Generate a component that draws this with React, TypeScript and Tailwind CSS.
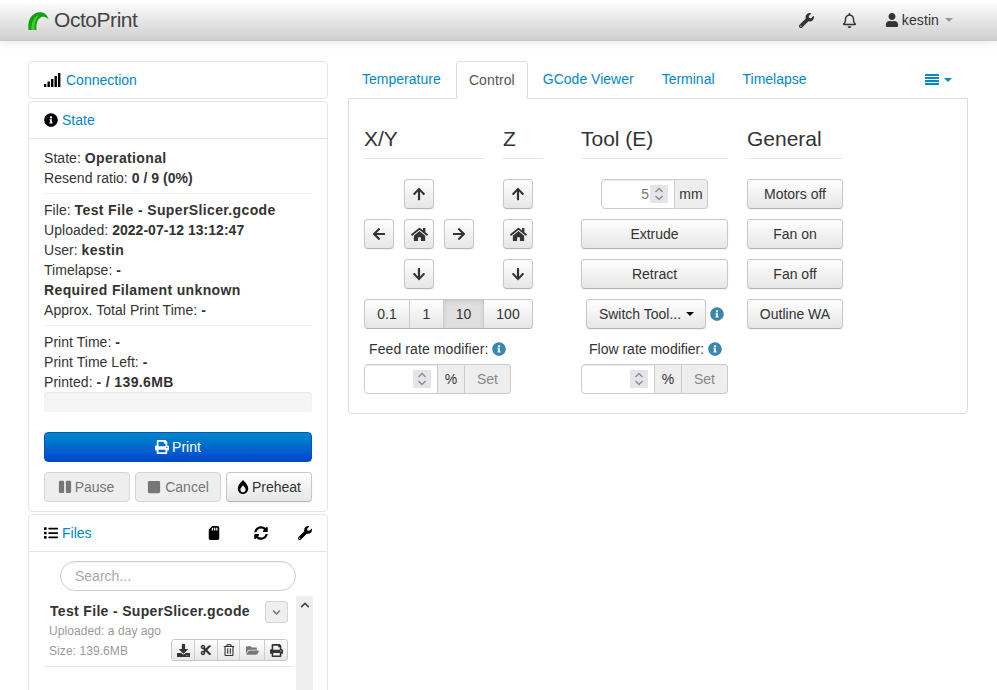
import React from "react";
import {
  FaWrench, FaRegBell, FaUser, FaInfoCircle, FaArrowUp, FaArrowDown, FaArrowLeft, FaArrowRight,
  FaHome, FaPrint, FaPause, FaStop, FaBurn, FaList, FaSdCard, FaSyncAlt, FaDownload, FaCut, FaRegTrashAlt,
  FaFolderOpen, FaChevronUp, FaChevronDown,
} from "react-icons/fa";

const btn =
  "inline-flex items-center justify-center h-[30px] rounded-[4px] border border-[#c8c8c8] border-b-[#b3b3b3] bg-gradient-to-b from-white to-[#e6e6e6] text-[#333] shadow-[0_1px_2px_rgba(0,0,0,0.05)] text-[14px]";
const disabledBtn =
  "inline-flex items-center justify-center h-[30px] rounded-[4px] border border-[#d5d5d5] bg-[#eeeeee] text-[#777] text-[14px]";

function Signal() {
  return (
    <svg width="17" height="14" viewBox="0 0 17 14" className="inline-block mr-[1px]" fill="#000">
      <rect x="0" y="11" width="2.4" height="3" />
      <rect x="3.5" y="8.5" width="2.4" height="5.5" />
      <rect x="7" y="6" width="2.4" height="8" />
      <rect x="10.5" y="3" width="2.4" height="11" />
      <rect x="14" y="0" width="2.4" height="14" />
    </svg>
  );
}

function Logo() {
  return (
    <svg width="21" height="18" viewBox="0 0 21 18" className="block mt-[1px]">
      <path d="M0.5 18 C-1 7 5 0.3 12 0.3 C16.5 0.3 19.5 3 20.5 7.5 C18.5 5 15.5 4.2 13 5.3 C9.5 7 8 11.5 8.5 18 Z" fill="#12a012" />
      <path d="M3.5 18 C3 11 6 4.5 11 3 C7.5 7 6 12 6.5 18 Z" fill="#3fcf2c" />
    </svg>
  );
}

function Caret({ color, className = "" }: { color: string; className?: string }) {
  return (
    <svg width="8" height="4" viewBox="0 0 8 4" className={`shrink-0 ${className}`}>
      <path d="M0 0 H8 L4 4 Z" fill={color} />
    </svg>
  );
}

function Spinner() {
  return (
    <span className="flex flex-col items-center justify-center w-[18px] h-[18px] bg-[#e4e4ea] shrink-0">
      <svg width="10" height="16" viewBox="0 0 10 16" fill="none" stroke="#8a8a8a" strokeWidth="1.3">
        <path d="M1.5 6 L5 2.5 L8.5 6" />
        <path d="M1.5 10 L5 13.5 L8.5 10" />
      </svg>
    </span>
  );
}

function Info() {
  return <FaInfoCircle className="text-[#3a87ad] text-[14px] shrink-0" />;
}

function NumberGroup({ value, unit, set, unitWidth, inputWidth }: { value?: string; unit: string; set?: boolean; unitWidth: string; inputWidth: string }) {
  return (
    <div className="flex h-[30px]">
      <div className={`${inputWidth} flex items-center justify-end gap-[1px] pr-[6px] border border-[#ccc] rounded-l-[4px] bg-white text-[#777] text-[14px] shadow-[inset_0_1px_1px_rgba(0,0,0,0.075)]`}>
        {value && <span>{value}</span>}
        <Spinner />
      </div>
      <div className={`${unitWidth} flex items-center justify-center bg-[#eee] border border-l-0 border-[#ccc] text-[#333] text-[14px] ${set ? "" : "rounded-r-[4px]"}`}>{unit}</div>
      {set && <div className="w-[46px] flex items-center justify-center bg-[#eee] border border-l-0 border-[#ccc] rounded-r-[4px] text-[#888] text-[14px]">Set</div>}
    </div>
  );
}

function SquareBtn({ children }: { children: React.ReactNode }) {
  return <button className={`${btn} w-[30px] text-[14px]`}>{children}</button>;
}

function Head({ title, width }: { title: string; width: string }) {
  return (
    <div className={`${width} h-[40px] border-b border-[#e5e5e5] text-[21px] leading-[40px] text-[#333]`}>{title}</div>
  );
}

function Panel({ children, className = "" }: { children: React.ReactNode; className?: string }) {
  return <section className={`border border-[#e5e5e5] rounded-[4px] ${className}`}>{children}</section>;
}

function PanelHead({ icon, title }: { icon: React.ReactNode; title: string }) {
  return (
    <div className="h-[36px] px-[15px] flex items-center gap-[4px] text-[14px]">
      {icon}
      <a className="text-[#0088cc]">{title}</a>
    </div>
  );
}

function Line({ label, value, numeric }: { label: string; value: string; numeric?: boolean }) {
  return (
    <div className="h-[20px] leading-[20px] tracking-[0.04px]">
      {label}{" "}
      <b className={numeric ? "tracking-[0.03px]" : "tracking-[0.37px]"}>{value}</b>
    </div>
  );
}

export default function App() {
  return (
    <div className="h-[690px] overflow-hidden bg-white text-[#333] text-[14px] leading-[20px] font-['Liberation_Sans',Arial,sans-serif]">
      <header className="h-[41px] flex items-center bg-gradient-to-b from-white to-[#cfcfcf] border-b border-[#c8c8c8] shadow-[0_1px_10px_rgba(0,0,0,0.1)] pl-[28px] pr-[44px]">
        <Logo />
        <span className="ml-[5px] text-[21px] text-[#444] -tracking-[0.45px]">OctoPrint</span>
        <div className="ml-auto flex items-center text-[#333]">
          <FaWrench className="text-[15px]" />
          <FaRegBell className="ml-[28px] text-[15px]" />
          <FaUser className="ml-[28px] text-[14px]" />
          <span className="ml-[3px] tracking-[0.1px]">kestin</span>
          <Caret color="#999" className="ml-[6px]" />
        </div>
      </header>

      <main className="flex pl-[28px] pr-[29px] pt-[20px] gap-[20px]">
        <aside className="w-[300px] shrink-0 flex flex-col gap-[2px]">
          <Panel>
            <PanelHead icon={<Signal />} title="Connection" />
          </Panel>

          <Panel className="h-[411px]">
            <PanelHead icon={<FaInfoCircle className="text-[14px] text-black" />} title="State" />
            <div className="border-t border-[#e5e5e5] px-[15px] pt-[9px]">
              <Line label="State:" value="Operational" />
              <Line label="Resend ratio:" value="0 / 9 (0%)" numeric />
              <div className="h-px bg-[#eee] mt-[5px] mb-[6px]" />
              <Line label="File:" value="Test File - SuperSlicer.gcode" />
              <Line label="Uploaded:" value="2022-07-12 13:12:47" numeric />
              <Line label="User:" value="kestin" />
              <Line label="Timelapse:" value="-" />
              <div className="h-[20px]"><b className="tracking-[0.37px]">Required Filament unknown</b></div>
              <Line label="Approx. Total Print Time:" value="-" />
              <div className="h-px bg-[#eee] mt-[5px] mb-[6px]" />
              <Line label="Print Time:" value="-" />
              <Line label="Print Time Left:" value="-" />
              <Line label="Printed:" value="- / 139.6MB" />
              <div className="h-[20px] rounded-[4px] bg-[#f5f5f5] shadow-[inset_0_1px_2px_rgba(0,0,0,0.06)]" />
              <button className="mt-[20px] w-full h-[30px] rounded-[4px] bg-gradient-to-b from-[#0088cc] to-[#0044cc] text-white flex items-center justify-center gap-[3px] border border-[#0055bb]">
                <FaPrint className="text-[14px]" /> Print
              </button>
              <div className="mt-[10px] flex gap-[5px]">
                <button className={`${disabledBtn} w-[86px] gap-[3px] pr-[2px]`}><FaPause className="text-[14px]" />Pause</button>
                <button className={`${disabledBtn} w-[86px] gap-[4px]`}><FaStop className="text-[14px]" />Cancel</button>
                <button className={`${btn} w-[86px] gap-[2px] pr-[1px]`}><FaBurn className="text-[14px] text-black" />Preheat</button>
              </div>
            </div>
          </Panel>

          <Panel className="h-[200px] overflow-hidden">
            <div className="h-[36px] pl-[15px] pr-[15px] flex items-center text-[14px]">
              <FaList className="text-[14px] text-black" />
              <a className="ml-[4px] text-[#0088cc]">Files</a>
              <FaSdCard className="ml-auto text-[14px] text-black" />
              <FaSyncAlt className="ml-[33px] text-[14px] text-black" />
              <FaWrench className="ml-[30px] text-[14px] text-black" />
            </div>
            <div className="border-t border-[#e5e5e5] flex flex-col">
              <div className="mt-[9px] ml-[31px] w-[236px] h-[30px] rounded-[15px] border border-[#ccc] px-[14px] flex items-center text-[#aaa] shadow-[inset_0_1px_1px_rgba(0,0,0,0.05)]">Search...</div>
              <div className="mt-[5px] flex ml-[15px]">
                <div className="w-[249px]">
                  <div className="h-[71px] border-b border-[#e5e5e5] pl-[5px] pr-[5px] pt-[5px] relative">
                    <div className="ml-[1px] font-bold tracking-[0.33px] leading-[20px]">Test File - SuperSlicer.gcode</div>
                    <div className="text-[12px] text-[#999] leading-[20px] tracking-[0.07px]">Uploaded: a day ago</div>
                    <div className="text-[12px] text-[#999] leading-[20px] tracking-[0.07px]">Size: 139.6MB</div>
                    <button className="absolute right-[5px] top-[5px] w-[23px] h-[22px] rounded-[3px] border border-[#d5d5d5] bg-[#eee] flex items-center justify-center text-[#777]"><FaChevronDown className="text-[9px]" /></button>
                    <div className="absolute right-[5px] top-[43px] flex h-[22px] rounded-[3px] border border-[#c8c8c8] bg-gradient-to-b from-white to-[#e6e6e6] text-[12px] text-[#333]">
                      <span className="w-[23px] flex items-center justify-center border-r border-[#ccc]"><FaDownload className="text-[13px]" /></span>
                      <span className="w-[23px] flex items-center justify-center border-r border-[#ccc]"><FaCut /></span>
                      <span className="w-[22px] flex items-center justify-center border-r border-[#ccc]"><FaRegTrashAlt /></span>
                      <span className="w-[25px] flex items-center justify-center border-r border-[#ccc] text-[#777]"><FaFolderOpen className="text-[13px]" /></span>
                      <span className="w-[22px] flex items-center justify-center"><FaPrint className="text-[13px]" /></span>
                    </div>
                  </div>
                </div>
                <div className="ml-[3px] w-[17px] h-[100px] bg-[#efefef] flex justify-center pt-[3px]"><FaChevronUp className="text-[10px] text-[#444] mt-[1px]" /></div>
              </div>
            </div>
          </Panel>
        </aside>

        <div className="w-[620px] shrink-0">
          <nav className="h-[37px] flex items-start relative pr-[16px]">
            <a className="h-[37px] pl-[14px] pr-[15px] leading-[37px] text-[#0088cc] tracking-[0.02px]">Temperature</a>
            <a className="h-[38px] w-[72px] text-center leading-[37px] text-[#555] bg-white border border-[#ddd] border-b-white rounded-t-[4px] z-10 tracking-[0.1px]">Control</a>
            <a className="h-[37px] px-[15px] leading-[37px] text-[#0088cc]">GCode Viewer</a>
            <a className="h-[37px] pl-[13px] pr-[14px] leading-[37px] text-[#0088cc]">Terminal</a>
            <a className="h-[37px] pl-[14px] pr-[15px] leading-[37px] text-[#0088cc]">Timelapse</a>
            <span className="ml-auto h-[37px] flex items-center gap-[5px]">
              <svg width="14" height="11" viewBox="0 0 14 11" fill="#0088cc" className="-ml-[1px]">
                <rect x="0" y="0" width="14" height="2" />
                <rect x="0" y="3" width="14" height="2" />
                <rect x="0" y="6" width="14" height="2" />
                <rect x="0" y="9" width="14" height="2" />
              </svg>
              <Caret color="#0088cc" />
            </span>
          </nav>
          <div className="h-[316px] border border-[#ddd] rounded-b-[4px] pt-[20px] pl-[15px] flex">
            <div className="w-[217px] shrink-0">
              <div className="flex gap-[19px]">
                <div className="w-[120px]">
                  <Head title="X/Y" width="w-[120px]" />
                  <div className="mt-[20px] grid grid-cols-[30px_30px_30px] gap-x-[10px] gap-y-[10px]">
                    <span />
                    <SquareBtn><FaArrowUp className="text-[14px]" /></SquareBtn>
                    <span />
                    <SquareBtn><FaArrowLeft className="text-[14px]" /></SquareBtn>
                    <SquareBtn><FaHome className="text-[17px]" /></SquareBtn>
                    <SquareBtn><FaArrowRight className="text-[14px]" /></SquareBtn>
                    <span />
                    <SquareBtn><FaArrowDown className="text-[14px]" /></SquareBtn>
                    <span />
                  </div>
                </div>
                <div className="w-[40px]">
                  <Head title="Z" width="w-[40px]" />
                  <div className="mt-[20px] flex flex-col gap-[10px]">
                    <SquareBtn><FaArrowUp className="text-[14px]" /></SquareBtn>
                    <SquareBtn><FaHome className="text-[17px]" /></SquareBtn>
                    <SquareBtn><FaArrowDown className="text-[14px]" /></SquareBtn>
                  </div>
                </div>
              </div>
              <div className="mt-[10px] flex w-[169px] h-[30px] rounded-[4px] border border-[#c8c8c8] border-b-[#b3b3b3] bg-gradient-to-b from-white to-[#e6e6e6] text-[14px] text-[#333]">
                <span className="w-[45px] flex items-center justify-center border-r border-[#ccc]">0.1</span>
                <span className="w-[33px] flex items-center justify-center">1</span>
                <span className="w-[41px] flex items-center justify-center bg-[#e0e0e0] border-x border-[#ccc] shadow-[inset_0_2px_4px_rgba(0,0,0,0.1)]">10</span>
                <span className="flex-1 flex items-center justify-center">100</span>
              </div>
              <div className="mt-[10px] h-[20px] pl-[5px] flex items-center gap-[4px]"><span className="tracking-[0.1px]">Feed rate modifier:</span> <Info /></div>
              <div className="mt-[5px]"><NumberGroup unit="%" set inputWidth="w-[74px]" unitWidth="w-[27px]" /></div>
            </div>
            <div className="w-[166px] shrink-0">
              <Head title="Tool (E)" width="w-[147px]" />
              <div className="mt-[20px] w-[147px] flex flex-col gap-[10px]">
                <div className="flex justify-center"><NumberGroup value="5" unit="mm" inputWidth="w-[74px]" unitWidth="w-[33px]" /></div>
                <button className={`${btn} w-full`}>Extrude</button>
                <button className={`${btn} w-full`}>Retract</button>
                <div className="flex items-center justify-end gap-[4px] pr-[4px]">
                  <button className={`${btn} w-[120px] gap-[5px] pl-[1px]`}>Switch Tool...<Caret color="#000" /></button>
                  <Info />
                </div>
              </div>
              <div className="mt-[10px] w-[147px] h-[20px] pl-[8px] flex items-center gap-[4px]">Flow rate modifier: <Info /></div>
              <div className="mt-[5px]"><NumberGroup unit="%" set inputWidth="w-[74px]" unitWidth="w-[27px]" /></div>
            </div>
            <div className="w-[96px] shrink-0">
              <Head title="General" width="w-[96px]" />
              <div className="mt-[20px] flex flex-col gap-[10px]">
                <button className={`${btn} w-full`}>Motors off</button>
                <button className={`${btn} w-full`}>Fan on</button>
                <button className={`${btn} w-full`}>Fan off</button>
                <button className={`${btn} w-full`}>Outline WA</button>
              </div>
            </div>
          </div>
        </div>
      </main>
    </div>
  );
}
